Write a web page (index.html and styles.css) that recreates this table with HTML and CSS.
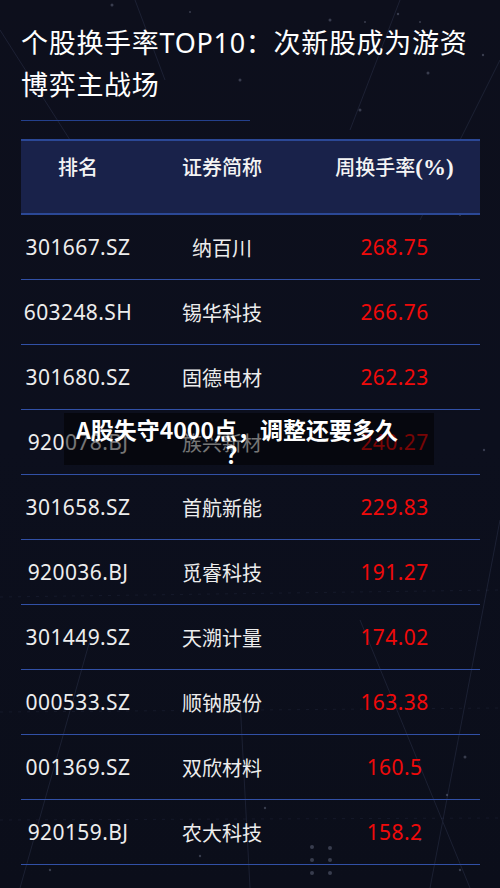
FILE: index.html
```html
<!DOCTYPE html>
<html lang="zh-CN">
<head>
<meta charset="utf-8">
<title>个股换手率TOP10</title>
<link rel="stylesheet" href="styles.css">
</head>
<body>
<div class="page">
  <svg class="bg" width="500" height="888" viewBox="0 0 500 888" aria-hidden="true">
    <g stroke="#5a6690" stroke-width="1" fill="none" opacity="0.2">
      <line x1="0" y1="30" x2="70" y2="140"/>
      <line x1="135" y1="0" x2="165" y2="80"/>
      <line x1="400" y1="0" x2="350" y2="130"/>
      <line x1="500" y1="60" x2="420" y2="220"/>
      <line x1="500" y1="520" x2="430" y2="888"/>
      <line x1="360" y1="620" x2="470" y2="888"/>
      <line x1="90" y1="640" x2="20" y2="888"/>
      <line x1="240" y1="700" x2="250" y2="888"/>
    </g>
    <g stroke="#5a6690" stroke-width="1" fill="none" opacity="0.12" stroke-dasharray="3 6">
      <line x1="0" y1="597" x2="500" y2="590"/>
      <line x1="0" y1="712" x2="500" y2="708"/>
      <line x1="0" y1="820" x2="500" y2="818"/>
    </g>
    <g fill="#8c93ad" opacity="0.35">
      <circle cx="112" cy="5" r="1.5"/>
      <circle cx="190" cy="12" r="1"/>
      <circle cx="330" cy="20" r="1.5"/>
      <circle cx="345" cy="50" r="1.2"/>
      <circle cx="365" cy="22" r="1"/>
      <circle cx="398" cy="14" r="1.2"/>
      <circle cx="420" cy="22" r="1"/>
      <circle cx="444" cy="40" r="1.2"/>
      <circle cx="428" cy="73" r="1.5"/>
      <circle cx="240" cy="80" r="1.5"/>
      <circle cx="360" cy="110" r="1.5"/>
      <circle cx="483" cy="55" r="1.2"/>
      <circle cx="460" cy="215" r="1"/>
      <circle cx="484" cy="450" r="1.2"/>
      <circle cx="465" cy="757" r="1.5"/>
      <circle cx="447" cy="795" r="1.2"/>
      <circle cx="312" cy="847" r="2"/>
      <circle cx="330" cy="848" r="2"/>
      <circle cx="312" cy="860" r="2"/>
      <circle cx="330" cy="860" r="2"/>
      <circle cx="312" cy="873" r="2"/>
      <circle cx="330" cy="873" r="2"/>
      <circle cx="200" cy="856" r="1.2"/>
      <circle cx="50" cy="870" r="1.2"/>
      <circle cx="265" cy="808" r="1.2"/>
      <circle cx="420" cy="840" r="1.2"/>
      <circle cx="460" cy="870" r="1.2"/>
    </g>
  </svg>

  <header class="title-block">
    <h1 class="title">个股换手率TOP10：次新股成为游资博弈主战场</h1>
    <div class="title-rule"></div>
  </header>

  <section class="table">
    <div class="thead">
      <div class="cell c1">排名</div>
      <div class="cell c2">证券简称</div>
      <div class="cell c3">周换手率<b class="pct">(%)</b></div>
    </div>
    <div class="row"><div class="cell c1 code">301667.SZ</div><div class="cell c2 name">纳百川</div><div class="cell c3 val">268.75</div></div>
    <div class="row"><div class="cell c1 code">603248.SH</div><div class="cell c2 name">锡华科技</div><div class="cell c3 val">266.76</div></div>
    <div class="row"><div class="cell c1 code">301680.SZ</div><div class="cell c2 name">固德电材</div><div class="cell c3 val">262.23</div></div>
    <div class="row"><div class="cell c1 code">920078.BJ</div><div class="cell c2 name">族兴新材</div><div class="cell c3 val">240.27</div></div>
    <div class="row"><div class="cell c1 code">301658.SZ</div><div class="cell c2 name">首航新能</div><div class="cell c3 val">229.83</div></div>
    <div class="row"><div class="cell c1 code">920036.BJ</div><div class="cell c2 name">觅睿科技</div><div class="cell c3 val">191.27</div></div>
    <div class="row"><div class="cell c1 code">301449.SZ</div><div class="cell c2 name">天溯计量</div><div class="cell c3 val">174.02</div></div>
    <div class="row"><div class="cell c1 code">000533.SZ</div><div class="cell c2 name">顺钠股份</div><div class="cell c3 val">163.38</div></div>
    <div class="row"><div class="cell c1 code">001369.SZ</div><div class="cell c2 name">双欣材料</div><div class="cell c3 val">160.5</div></div>
    <div class="row"><div class="cell c1 code">920159.BJ</div><div class="cell c2 name">农大科技</div><div class="cell c3 val">158.2</div></div>
  </section>

  <div class="overlay"></div>
  <div class="overlay-text">A股失守4000点，调整还要多久<br>？</div>
</div>
</body>
</html>
```

FILE: styles.css
```css
* { box-sizing: border-box; }
html, body {
  margin: 0;
  padding: 0;
  background: #0c0f1b;
}
body {
  font-family: "Noto Sans", "Noto Sans CJK SC", sans-serif;
  color: #f2f2f2;
}
.page {
  position: relative;
  width: 500px;
  height: 888px;
  overflow: hidden;
  background: linear-gradient(180deg, #0d0f1c 0%, #0c0f1d 50%, #0b0e1a 100%);
  padding: 22px 20px 0 21px;
}
.bg {
  position: absolute;
  left: 0;
  top: 0;
  z-index: 0;
}
.title-block, .table { position: relative; z-index: 1; }
.title {
  margin: 0;
  font-family: "Noto Sans", "Noto Sans CJK SC", sans-serif;
  font-weight: 400;
  font-size: 27px;
  line-height: 42px;
  color: #ffffff;
  letter-spacing: 0.7px;
}
.title-rule {
  width: 229px;
  height: 1px;
  margin-top: 14px;
  background: #24408c;
}
.table {
  margin-top: 18px;
  width: 459px;
}
.thead {
  display: grid;
  grid-template-columns: 114px 174px 171px;
  height: 76px;
  padding-top: 14px;
  align-items: start;
  background: #19224a;
  border-top: 2px solid #2b4896;
  border-bottom: 2px solid #2b4896;
}
.thead .cell {
  font-family: "Noto Sans CJK SC", sans-serif;
  font-weight: 500;
  font-size: 20px;
  line-height: 24px;
  color: #f4f4f4;
}
.pct {
  font-family: "Liberation Serif", serif;
  font-weight: 700;
  font-size: 23px;
}
.row {
  display: grid;
  grid-template-columns: 114px 174px 171px;
  height: 65px;
  align-items: center;
  border-bottom: 1px solid #3150a6;
}
.cell { text-align: center; }
.code {
  font-family: "Noto Sans", sans-serif;
  font-size: 21px;
  letter-spacing: 0.4px;
  color: #ededed;
}
.name {
  font-family: "Noto Sans CJK SC", sans-serif;
  font-size: 20px;
  color: #ededed;
}
.val {
  font-family: "Noto Sans", sans-serif;
  font-size: 21px;
  letter-spacing: 0.4px;
  color: #f00a0a;
}
.overlay {
  position: absolute;
  z-index: 2;
  left: 64px;
  top: 413px;
  width: 370px;
  height: 52px;
  background: rgba(0, 0, 0, 0.5);
}
.overlay-text {
  position: absolute;
  z-index: 3;
  left: 57px;
  top: 417px;
  width: 360px;
  text-align: center;
  font-family: "Noto Sans CJK SC", sans-serif;
  font-weight: 700;
  font-size: 23px;
  line-height: 24px;
  color: #ffffff;
}
```
